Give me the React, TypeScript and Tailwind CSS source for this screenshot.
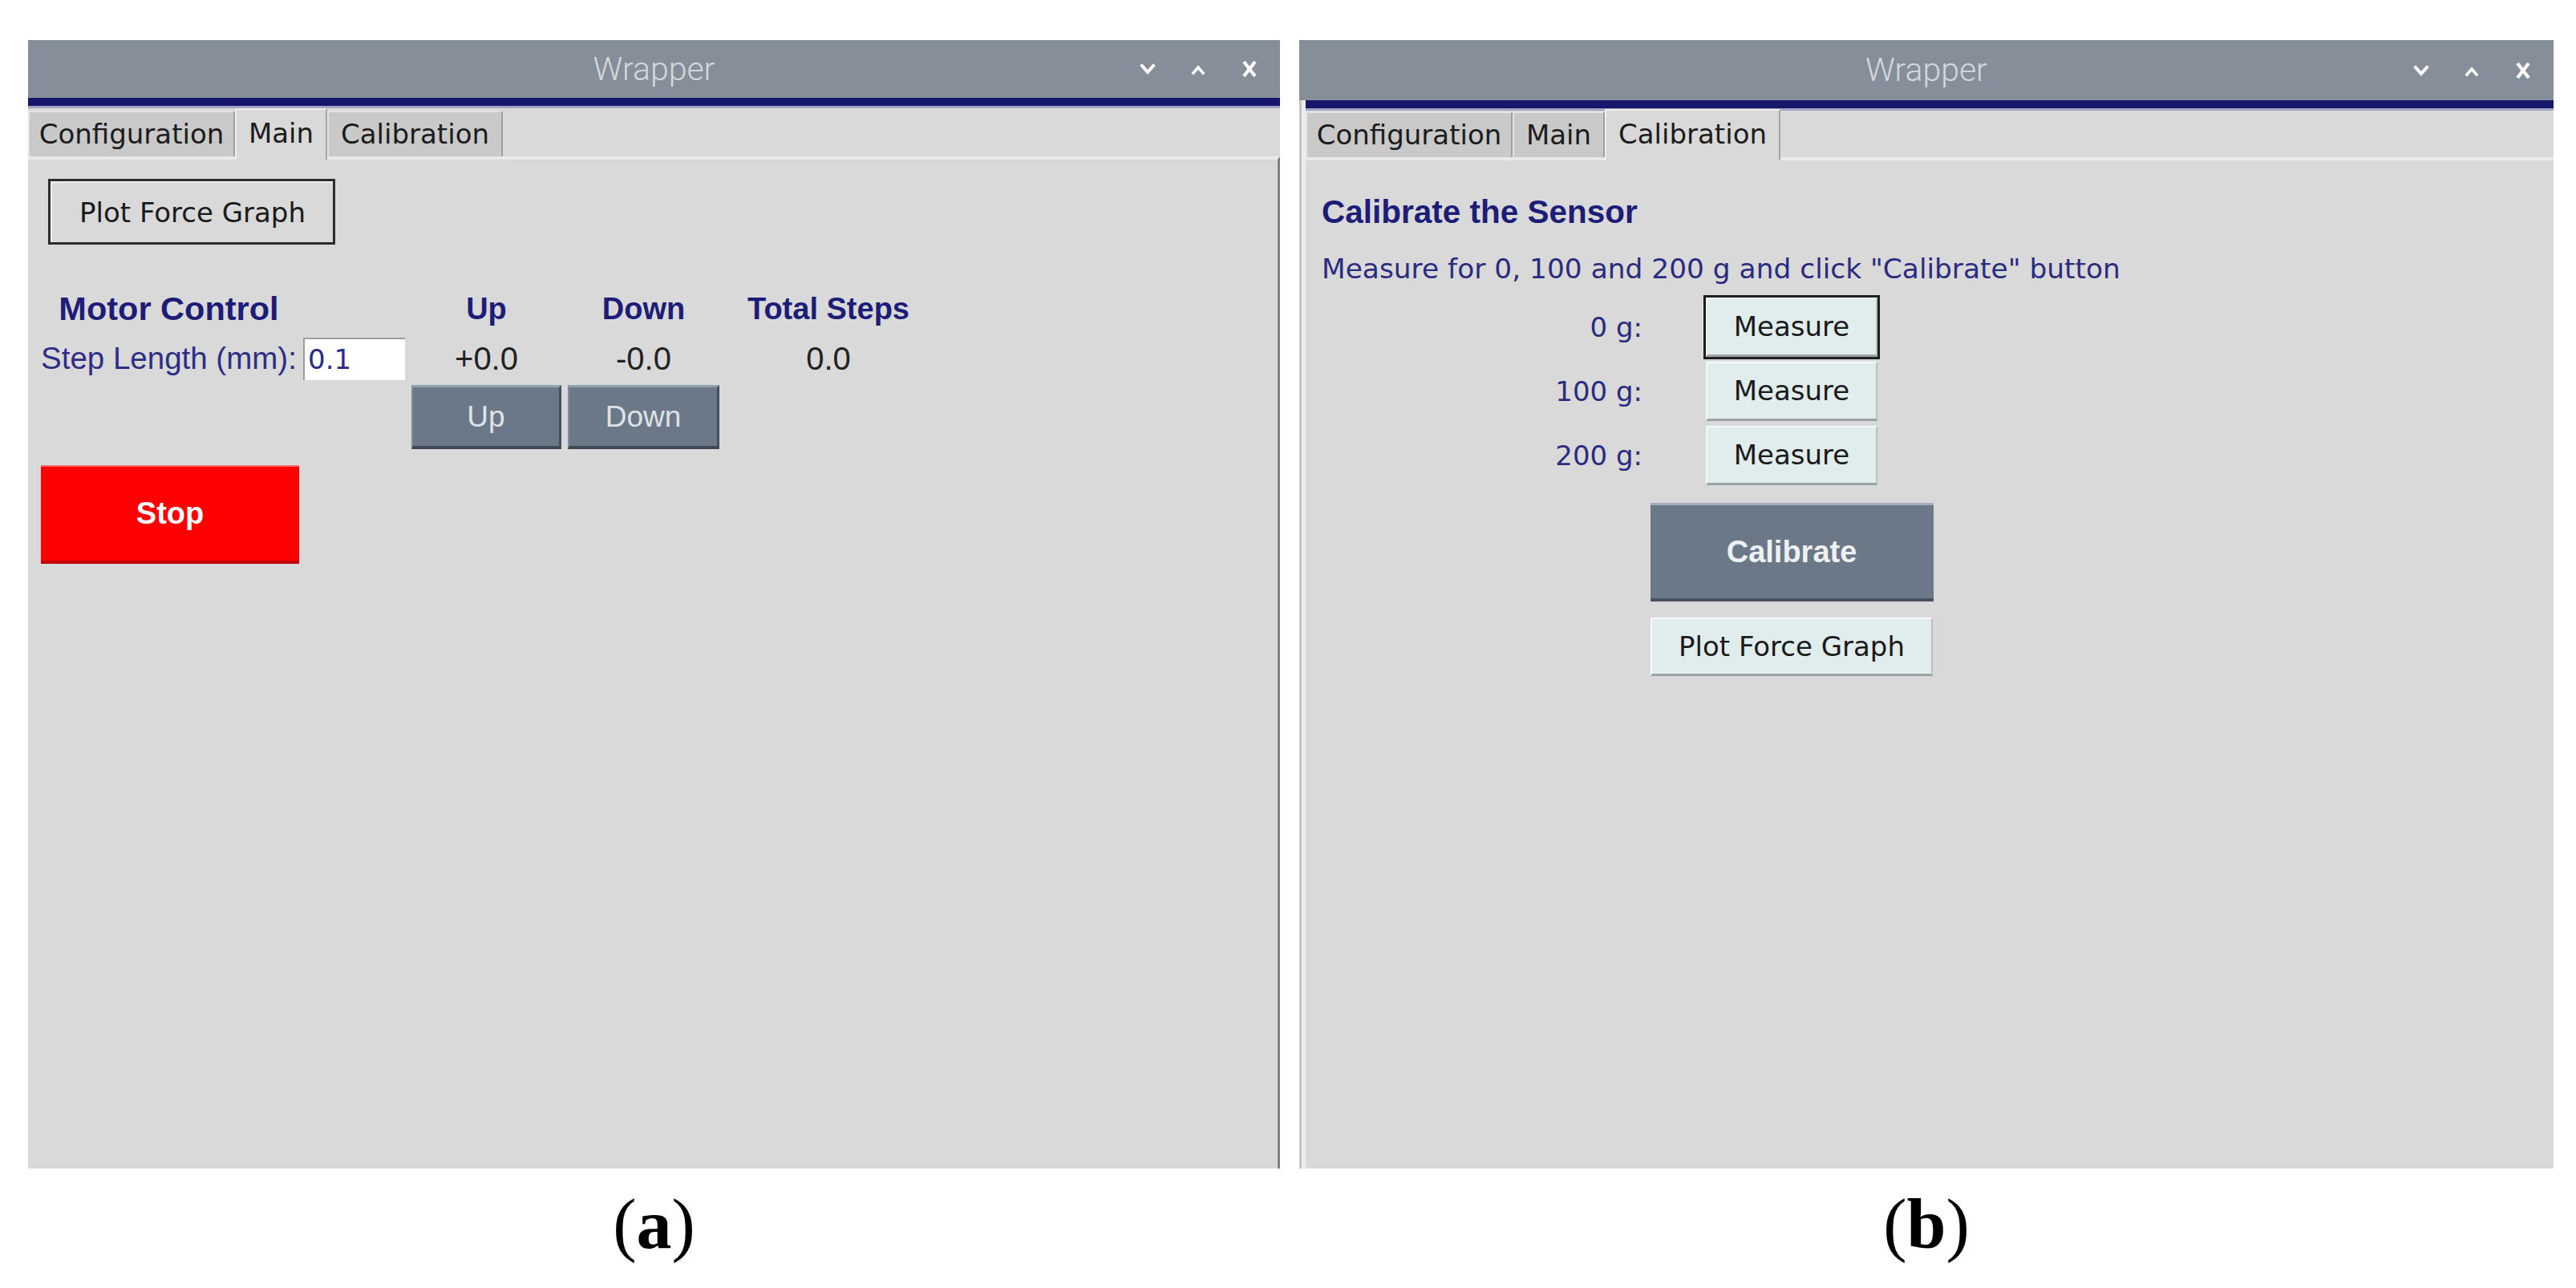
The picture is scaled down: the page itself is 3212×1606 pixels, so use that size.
import React from "react";

const dv = "[font-family:'DejaVu_Sans',sans-serif]";
const ls = "[font-family:'Liberation_Sans',Arial,sans-serif]";

function ChevronDown() {
  return (
    <svg width="22" height="22" viewBox="0 0 22 22">
      <polyline points="4,7 11,15 18,7" fill="none" stroke="#ffffff" strokeWidth="4" strokeLinecap="square" />
    </svg>
  );
}
function ChevronUp() {
  return (
    <svg width="22" height="22" viewBox="0 0 22 22">
      <polyline points="5,16 11,9 17,16" fill="none" stroke="#ffffff" strokeWidth="3.6" strokeLinecap="square" />
    </svg>
  );
}
function CloseX() {
  return (
    <svg width="24" height="24" viewBox="0 0 24 24">
      <line x1="5" y1="3" x2="19" y2="21" stroke="#ffffff" strokeWidth="4.2" />
      <line x1="19" y1="3" x2="5" y2="21" stroke="#ffffff" strokeWidth="4.2" />
    </svg>
  );
}

function Tab({ label, width, active }: { label: string; width: string; active: boolean }) {
  if (active) {
    return (
      <div
        className={`${width} h-[64px] -mb-[4px] relative z-10 bg-[#d9d9d9] border-t-2 border-l-2 border-r-2 border-t-[#ededed] border-l-[#ededed] border-r-[#a5a5a5] flex items-center justify-center pb-[4px] text-[34px] text-[#1c1c1c] ${dv}`}
      >
        {label}
      </div>
    );
  }
  return (
    <div
      className={`${width} h-[57px] bg-[#c9c9c9] border-t-2 border-l-2 border-r-2 border-t-[#e3e3e3] border-l-[#e3e3e3] border-r-[#a0a0a0] flex items-center justify-center text-[34px] text-[#1c1c1c] ${dv}`}
    >
      {label}
    </div>
  );
}

function Window({
  active,
  titleH,
  right,
  children,
}: {
  active: number;
  titleH: string;
  right?: boolean;
  children: React.ReactNode;
}) {
  return (
    <div className="h-[1407px] flex flex-col">
      <div className={`${titleH} bg-[#868f99] grid grid-cols-[1fr_auto_1fr] items-center`}>
        <div />
        <div className="text-[41px] leading-none font-light text-[#d3d8dd] [font-family:Roboto,sans-serif]">Wrapper</div>
        <div className="flex items-center justify-end gap-[41px] pr-[26px]">
          <ChevronDown />
          <ChevronUp />
          <CloseX />
        </div>
      </div>
      <div className={`flex-1 flex flex-col ${right ? "border-l-[3px] border-l-[#c4c4c4]" : ""}`}>
        <div className={`flex-1 flex flex-col ${right ? "border-l-[5px] border-l-[#ececec]" : ""}`}>
          <div className="h-[10px] bg-[#16166b]" />
          <div className="h-[3px] bg-[#a4a4c4]" />
          <div className={`${right ? "h-[58px]" : "h-[60px]"} bg-[#d9d9d9] flex items-end`}>
            <Tab label="Configuration" width="w-[258px]" active={active === 0} />
            <Tab label="Main" width="w-[115px]" active={active === 1} />
            <Tab label="Calibration" width="w-[219px]" active={active === 2} />
          </div>
          <div
            className={`flex-1 bg-[#d9d9d9] border-t-4 border-t-[#e9e9e9] ${right ? "" : "border-r-[3px] border-r-[#808080]"}`}
          >
            {children}
          </div>
        </div>
      </div>
    </div>
  );
}

function MainTab() {
  return (
    <div className="pl-4 pt-[24px]">
      <div
        className={`ml-[9px] w-[358px] h-[82px] border-[3px] border-[#2c2c2c] bg-[#d9d9d9] flex items-center justify-center text-[34px] text-[#1a1a1a] ${dv}`}
      >
        <div className="w-full h-full flex items-center justify-center border-t-2 border-l-2 border-t-[#efefef] border-l-[#efefef]">
          Plot Force Graph
        </div>
      </div>
      <div className="mt-[55px] grid grid-cols-[319px_127px_187px_189px_256px] gap-x-2 grid-rows-[58px_58px_84px_143px]">
        <div className={`self-start text-center leading-[50px] text-[41.5px] font-bold text-[#1d1d78] whitespace-nowrap ${ls}`}>Motor Control</div>
        <div />
        <div className={`self-start text-center leading-[50px] text-[38px] font-bold text-[#1d1d78] ${ls}`}>Up</div>
        <div className={`self-start text-center leading-[50px] text-[38px] font-bold text-[#1d1d78] ${ls}`}>Down</div>
        <div className={`self-start text-center leading-[50px] text-[38px] font-bold text-[#1d1d78] ${ls}`}>Total Steps</div>

        <div className={`self-center text-right pr-[3px] leading-[58px] text-[38.5px] text-[#2e2e86] whitespace-nowrap ${ls}`}>
          Step Length (mm):
        </div>
        <div
          className={`self-center h-[53px] bg-white border-t-2 border-l-2 border-t-[#9c9c9c] border-l-[#9c9c9c] pl-[4px] flex items-center text-[34px] text-[#2a2a88] ${dv}`}
        >
          0.1
        </div>
        <div className={`self-center text-center leading-[58px] text-[40px] text-[#222222] ${ls}`}>+0.0</div>
        <div className={`self-center text-center leading-[58px] text-[40px] text-[#222222] ${ls}`}>-0.0</div>
        <div className={`self-center text-center leading-[58px] text-[40px] text-[#222222] ${ls}`}>0.0</div>

        <div
          className={`col-start-3 self-end h-[80px] bg-[#6b7888] border-t-[3px] border-t-[#95a2b0] border-l-2 border-l-[#7f8c9b] border-r-[3px] border-r-[#47515d] border-b-[4px] border-b-[#3f4852] flex items-center justify-center text-[37px] text-[#dde2e7] ${ls}`}
        >
          Up
        </div>
        <div
          className={`self-end h-[80px] bg-[#6b7888] border-t-[3px] border-t-[#95a2b0] border-l-2 border-l-[#7f8c9b] border-r-[3px] border-r-[#47515d] border-b-[4px] border-b-[#3f4852] flex items-center justify-center text-[37px] text-[#dde2e7] ${ls}`}
        >
          Down
        </div>
        <div />

        <div
          className={`col-start-1 self-end w-[322px] h-[123px] bg-[#ff0000] border-t-2 border-t-[#ff6a6a] border-b-[4px] border-b-[#c40000] flex items-center justify-center text-[38px] font-bold text-white ${ls}`}
        >
          Stop
        </div>
      </div>
    </div>
  );
}

function MeasureButton({ focused }: { focused?: boolean }) {
  return (
    <div className={`h-[80px] w-[220px] ${focused ? "border-[3px] border-[#1e1e1e]" : "p-[3px]"}`}>
      <div
        className={`w-full h-full bg-[#e1ecec] border-t-2 border-l-2 border-t-[#f6fafa] border-l-[#f6fafa] border-r-2 border-r-[#b9c1c1] border-b-[3px] border-b-[#9ba4a4] flex items-center justify-center text-[34px] text-[#1a1a1a] ${dv}`}
      >
        Measure
      </div>
    </div>
  );
}

function CalibrationTab() {
  return (
    <div className="pl-5 pt-[40px]">
      <div className={`leading-[48px] text-[40.5px] font-bold text-[#1d1d78] ${ls}`}>Calibrate the Sensor</div>
      <div className={`mt-[27px] leading-[40px] text-[34.4px] text-[#2b2b80] ${dv}`}>
        Measure for 0, 100 and 200 g and click "Calibrate" button
      </div>
      <div className="mt-[13px] grid grid-cols-[400px_220px] gap-x-[76px]">
        <div className={`self-center text-right text-[34px] text-[#2b2b80] ${dv}`}>0 g:</div>
        <MeasureButton focused />
        <div className={`self-center text-right text-[34px] text-[#2b2b80] ${dv}`}>100 g:</div>
        <MeasureButton />
        <div className={`self-center text-right text-[34px] text-[#2b2b80] ${dv}`}>200 g:</div>
        <MeasureButton />
        <div
          className={`col-start-2 justify-self-center mt-[19px] w-[353px] h-[123px] bg-[#6b7888] border-t-[3px] border-t-[#a3aeba] border-b-[4px] border-b-[#48525e] flex items-center justify-center text-[38px] font-bold text-[#eef1f4] ${ls}`}
        >
          Calibrate
        </div>
        <div
          className={`col-start-2 justify-self-center mt-[20px] w-[352px] h-[73px] bg-[#e1ecec] border-t-2 border-l-2 border-t-[#f6fafa] border-l-[#f6fafa] border-r-2 border-r-[#b9c1c1] border-b-[3px] border-b-[#9ba4a4] flex items-center justify-center text-[34px] text-[#1a1a1a] whitespace-nowrap ${dv}`}
        >
          Plot Force Graph
        </div>
      </div>
    </div>
  );
}

function Caption({ letter }: { letter: string }) {
  return (
    <div className="mt-[20px] text-center text-[88px] leading-[100px] text-black [font-family:'Liberation_Serif','Times_New_Roman',serif]">
      (<span className="font-bold">{letter}</span>)
    </div>
  );
}

export default function App() {
  return (
    <div className="w-[3212px] h-[1606px] bg-white flex pl-[35px] pt-[50px] gap-[24px] overflow-hidden">
      <div className="w-[1561px] flex flex-col">
        <Window active={1} titleH="h-[72px]">
          <MainTab />
        </Window>
        <Caption letter="a" />
      </div>
      <div className="w-[1564px] flex flex-col">
        <Window active={2} titleH="h-[75px]" right>
          <CalibrationTab />
        </Window>
        <Caption letter="b" />
      </div>
    </div>
  );
}
